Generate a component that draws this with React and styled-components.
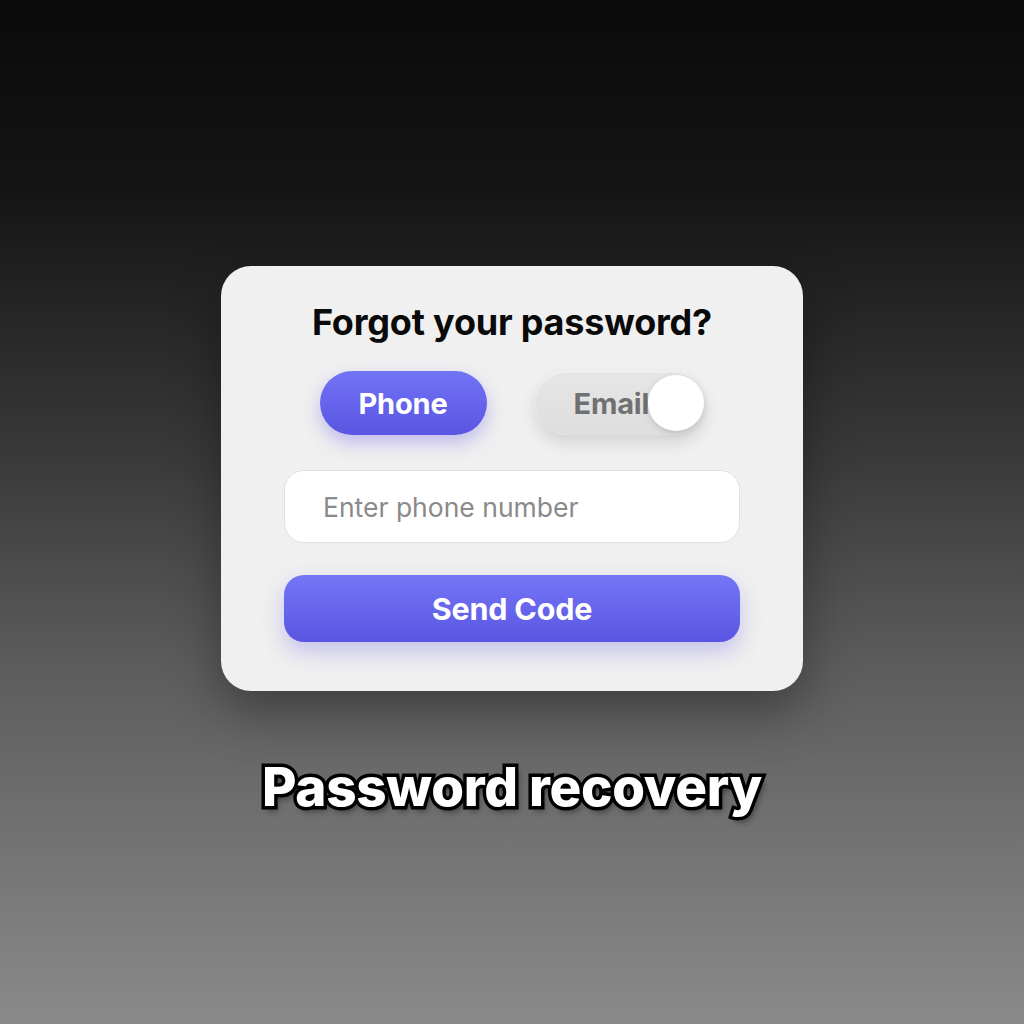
import React from "react";
import styled, { createGlobalStyle } from "styled-components";

const Global = createGlobalStyle`
  html, body { margin: 0; padding: 0; }
  body {
    font-family: Inter, "Noto Sans", sans-serif;
    background: linear-gradient(180deg, #0a0a0a 0%, #141414 18%, #3a3a3a 45%, #5c5c5c 65%, #8a8a8a 100%);
    min-height: 1024px;
  }
`;

const Page = styled.div`
  height: 1024px;
  display: flex;
  flex-direction: column;
  align-items: center;
  padding-top: 266px;
  box-sizing: border-box;
`;

const Card = styled.div`
  width: 582px;
  height: 425px;
  box-sizing: border-box;
  background: #f0f0f0;
  border-radius: 30px;
  box-shadow: 0 20px 50px rgba(0, 0, 0, 0.35);
  display: flex;
  flex-direction: column;
  align-items: center;
  padding-top: 35px;
`;

const Title = styled.h1`
  margin: 0;
  font-size: 36px;
  font-weight: 700;
  color: #0a0a0a;
  letter-spacing: -0.2px;
  line-height: 43px;
`;

const Toggles = styled.div`
  display: flex;
  gap: 48px;
  margin-top: 27px;
`;

const Pill = styled.div`
  position: relative;
  width: ${(p) => p.$w}px;
  height: 64px;
  border-radius: 32px;
  box-sizing: border-box;
  display: flex;
  align-items: center;
  font-size: 29px;
  font-weight: 700;
  letter-spacing: -0.2px;
  ${(p) =>
    p.$active
      ? `
    background: linear-gradient(180deg, #7173f5 0%, #5a55e2 100%);
    color: #ffffff;
    justify-content: center;
    box-shadow: 0 8px 18px rgba(99, 90, 230, 0.35);
  `
      : `
    background: linear-gradient(180deg, #e6e6e6 0%, #dedede 100%);
    color: #707070;
    padding-left: 39px;
    box-shadow: 0 8px 16px rgba(0, 0, 0, 0.12), inset 0 1px 2px rgba(255,255,255,0.6);
  `}
`;

const Knob = styled.span`
  position: absolute;
  right: 1px;
  top: 4px;
  width: 56px;
  height: 56px;
  border-radius: 50%;
  background: #ffffff;
  box-shadow: 0 2px 6px rgba(0, 0, 0, 0.15);
`;

const Input = styled.input`
  margin-top: 35px;
  width: 456px;
  height: 73px;
  box-sizing: border-box;
  border: 1.5px solid #e0e0e0;
  border-radius: 20px;
  background: #ffffff;
  padding: 0 0 0 38px;
  font-family: Inter, "Noto Sans", sans-serif;
  font-size: 26.5px;
  color: #333;
  outline: none;
  &::placeholder { color: #8a8a8a; }
`;

const SendButton = styled.button`
  margin-top: 32px;
  width: 456px;
  height: 67px;
  border: none;
  border-radius: 20px;
  background: linear-gradient(180deg, #7476f6 0%, #5a55e2 100%);
  color: #ffffff;
  font-family: Inter, "Noto Sans", sans-serif;
  font-size: 30.5px;
  font-weight: 700;
  letter-spacing: -0.2px;
  box-shadow: 0 10px 22px rgba(99, 90, 230, 0.3);
  cursor: pointer;
`;

const Caption = styled.div`
  margin-top: 64px;
  font-size: 53px;
  font-weight: 800;
  color: #ffffff;
  letter-spacing: -0.3px;
  -webkit-text-stroke: 7px #000;
  paint-order: stroke fill;
  text-shadow: 3px 5px 6px rgba(0, 0, 0, 0.45);
  line-height: 64px;
`;

export default function App() {
  return (
    <>
      <Global />
      <Page>
        <Card>
          <Title>Forgot your password?</Title>
          <Toggles>
            <Pill $active $w={167}>Phone</Pill>
            <Pill $w={170}>
              Email
              <Knob />
            </Pill>
          </Toggles>
          <Input placeholder="Enter phone number" />
          <SendButton>Send Code</SendButton>
        </Card>
        <Caption>Password recovery</Caption>
      </Page>
    </>
  );
}
